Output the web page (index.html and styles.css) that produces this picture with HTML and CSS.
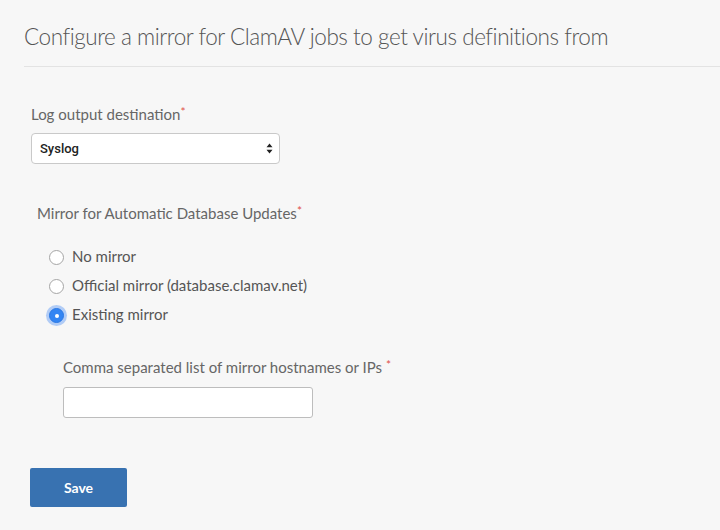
FILE: index.html
```html
<!DOCTYPE html>
<html>
<head>
<meta charset="utf-8">
<link rel="stylesheet" href="styles.css">
</head>
<body>
<div class="page">
  <h1 class="title">Configure a mirror for ClamAV jobs to get virus definitions from</h1>
  <form class="form">
    <div class="field">
      <label class="label">Log output destination<span class="req">*</span></label>
      <div class="select">
        <span class="select-value">Syslog</span>
        <svg class="select-arrows" width="7" height="11" viewBox="0 0 7 11"><path d="M3.5 0.5L6.5 4.2H0.5Z M3.5 10.5L6.5 6.8H0.5Z" fill="#222"/></svg>
      </div>
    </div>
    <div class="group">
      <div class="label group-label">Mirror for Automatic Database Updates<span class="req">*</span></div>
      <div class="radios">
        <label class="radio-row"><span class="radio"></span><span>No mirror</span></label>
        <label class="radio-row"><span class="radio"></span><span>Official mirror (database.clamav.net)</span></label>
        <label class="radio-row"><span class="radio checked"></span><span>Existing mirror</span></label>
      </div>
      <div class="sub">
        <div class="label">Comma separated list of mirror hostnames or IPs <span class="req">*</span></div>
        <div class="input"></div>
      </div>
    </div>
    <button type="button" class="btn">Save</button>
  </form>
</div>
</body>
</html>
```
FILE: styles.css
```css
html, body {
  margin: 0;
  padding: 0;
  background: #f7f7f7;
}
body {
  font-family: "Lato", "Open Sans", sans-serif;
  color: #555;
  height: 530px;
  overflow: hidden;
}
.page {
  padding: 0 0 0 24px;
}
.title {
  margin: 0;
  padding: 25px 0 17px 0;
  font-size: 22.5px;
  font-weight: 300;
  color: #555;
  letter-spacing: -0.45px;
  line-height: 24px;
  border-bottom: 1px solid #e3e3e3;
}
.form {
  padding-left: 7px;
}
.field {
  padding-top: 36px;
}
.label {
  font-size: 15px;
  color: #666;
  line-height: 18px;
  font-weight: 400;
}
.req {
  color: #e0524a;
  font-size: 12px;
  vertical-align: 4px;
}
.select {
  margin-top: 10px;
  background: #fff;
  border: 1px solid #c9c9c9;
  border-radius: 4px;
  display: flex;
  align-items: center;
  justify-content: space-between;
  padding: 0 6px 0 8px;
  box-sizing: border-box;
  width: 249px;
  height: 31px;
}
.select-value {
  font-family: "Roboto", sans-serif;
  font-size: 13px;
  font-weight: 500;
  color: #222;
}
.select-arrows { display: block; }
.group {
  padding-top: 38px;
  padding-left: 6px;
}
.group-label {
  line-height: 18px;
}
.radios {
  padding-top: 25px;
  padding-left: 12px;
  display: flex;
  flex-direction: column;
  gap: 11px;
}
.radio-row {
  display: flex;
  align-items: center;
  gap: 8px;
  font-size: 15px;
  color: #555;
  line-height: 18px;
}
.radio {
  width: 13px;
  height: 13px;
  border: 1px solid #a5a5a5;
  border-radius: 50%;
  background: #fff;
  flex: none;
  margin-top: 3px;
}
.radio.checked {
  background: #3385f3;
  border-color: #2a78e4;
  box-shadow: 0 0 0 3px rgba(90, 150, 245, 0.45);
  position: relative;
}
.radio.checked::after {
  content: "";
  position: absolute;
  left: 4.5px;
  top: 4.5px;
  width: 4px;
  height: 4px;
  border-radius: 50%;
  background: #fff;
}
.sub {
  padding-top: 33px;
  padding-left: 26px;
}
.input {
  margin-top: 11px;
  width: 250px;
  height: 31px;
  box-sizing: border-box;
  background: #fff;
  border: 1px solid #bdbdbd;
  border-radius: 3px;
}
.btn {
  margin-top: 50px;
  margin-left: -1px;
  width: 97px;
  height: 39px;
  border: none;
  border-radius: 2px;
  background: #3872b1;
  color: #fff;
  font-family: "Lato", sans-serif;
  font-size: 14px;
  font-weight: 700;
  cursor: pointer;
}
```
